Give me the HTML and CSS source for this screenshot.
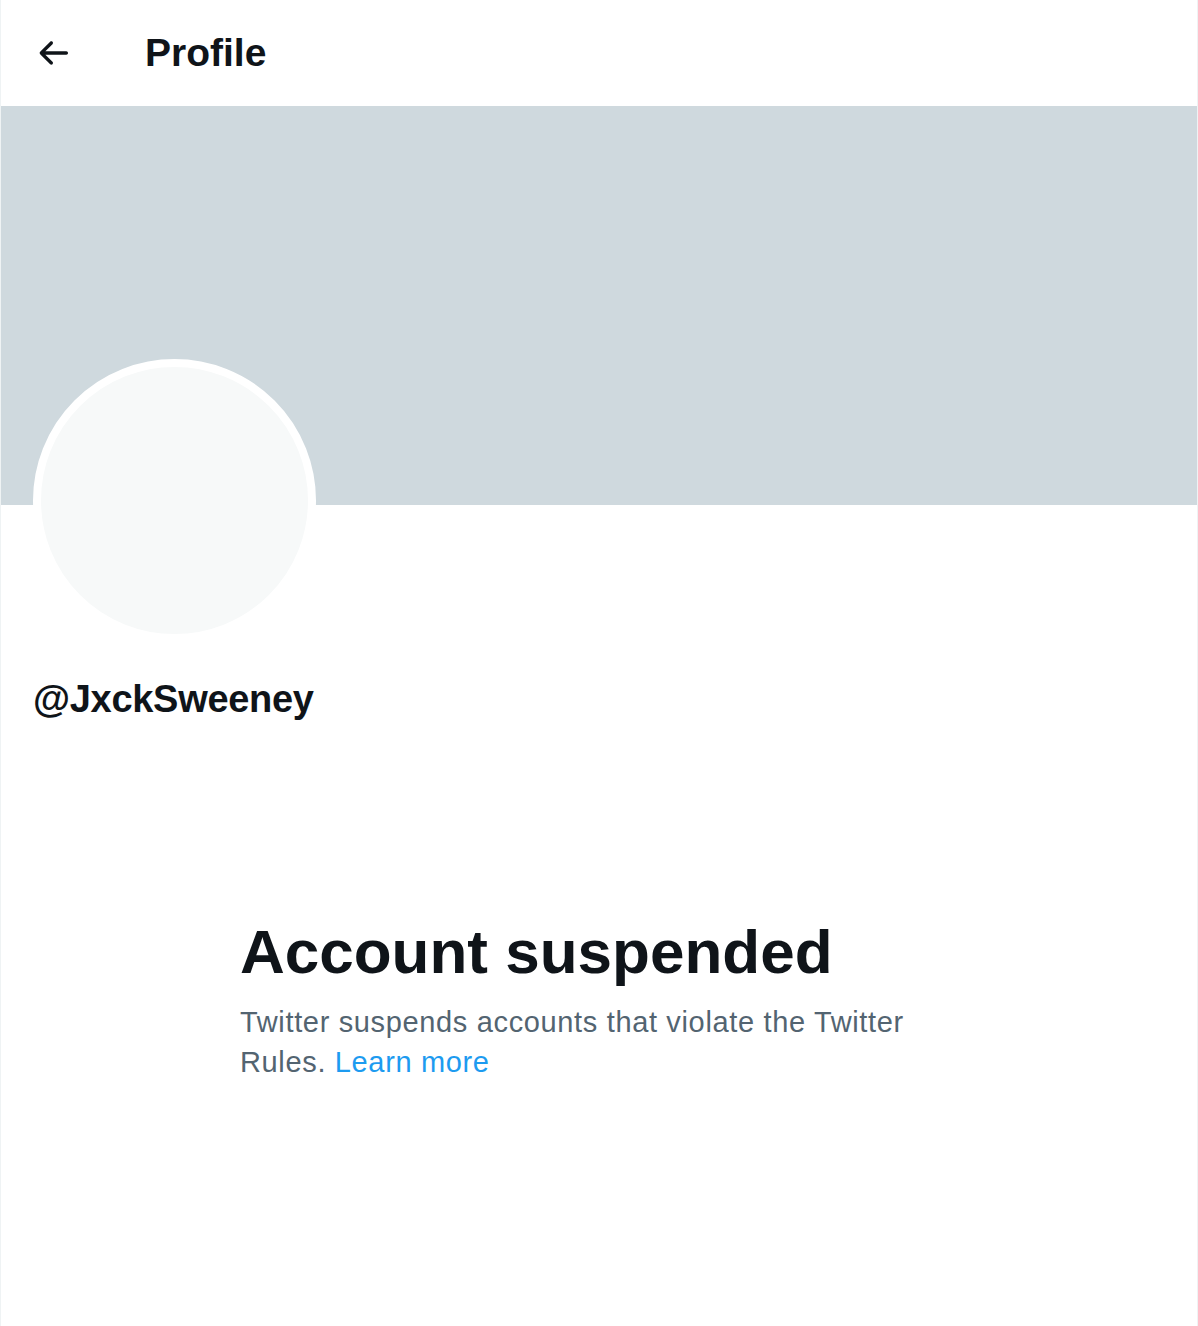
FILE: index.html
```html
<!DOCTYPE html>
<html lang="en">
<head>
    <meta charset="UTF-8">
    <meta name="viewport" content="width=device-width, initial-scale=1.0">
    <title>Profile</title>
    <link rel="stylesheet" href="styles.css">
</head>
<body>
    <div class="column">
        <div class="header">
            <a href="#" class="back-btn" aria-label="Back">
                <svg viewBox="0 0 24 24" width="40" height="40">
                    <path d="M20 11H7.414l4.293-4.293c.39-.39.39-1.023 0-1.414s-1.023-.39-1.414 0l-6 6c-.39.39-.39 1.023 0 1.414l6 6c.195.195.45.293.707.293s.512-.098.707-.293c.39-.39.39-1.023 0-1.414L7.414 13H20c.553 0 1-.447 1-1s-.447-1-1-1z"></path>
                </svg>
            </a>
            <h2 class="title">Profile</h2>
        </div>

        <div class="banner"></div>

        <div class="profile">
            <div class="avatar"></div>
            <div class="handle">@JxckSweeney</div>
        </div>

        <div class="empty-state">
            <h1>Account suspended</h1>
            <p>Twitter suspends accounts that violate the Twitter Rules. <a href="#">Learn more</a></p>
        </div>
    </div>
</body>
</html>
```

FILE: styles.css
```css
body {
    margin: 0;
    background: #ffffff;
    font-family: "Liberation Sans", Arial, sans-serif;
    color: #0f1419;
}
.column {
    width: 1196px;
    min-height: 100vh;
    border-left: 1px solid #eff3f4;
    border-right: 1px solid #eff3f4;
}
.header {
    height: 106px;
    display: flex;
    align-items: center;
    padding-left: 32px;
}
.back-btn {
    display: flex;
    width: 40px;
    height: 40px;
    margin-right: 72px;
}
.back-btn svg {
    fill: #0f1419;
}
.title {
    margin: 0;
    font-size: 39px;
    font-weight: 700;
    line-height: 46px;
}
.banner {
    height: 399px;
    background: #cfd9de;
}
.profile {
    padding-left: 32px;
}
.avatar {
    width: 267px;
    height: 267px;
    margin-top: -146px;
    border: 8px solid #ffffff;
    border-radius: 50%;
    background: #f7f9f9;
}
.handle {
    margin-top: 34px;
    font-size: 38px;
    font-weight: 700;
    line-height: 46px;
    letter-spacing: -0.3px;
}
.empty-state {
    width: 690px;
    margin: 194px 0 0 239px;
}
.empty-state h1 {
    margin: 0;
    font-size: 62px;
    font-weight: 700;
    line-height: 72px;
}
.empty-state p {
    margin: 14px 0 0;
    font-size: 29px;
    line-height: 40px;
    letter-spacing: 0.65px;
    color: #536471;
}
.empty-state a {
    color: #1d9bf0;
    text-decoration: none;
}
```
